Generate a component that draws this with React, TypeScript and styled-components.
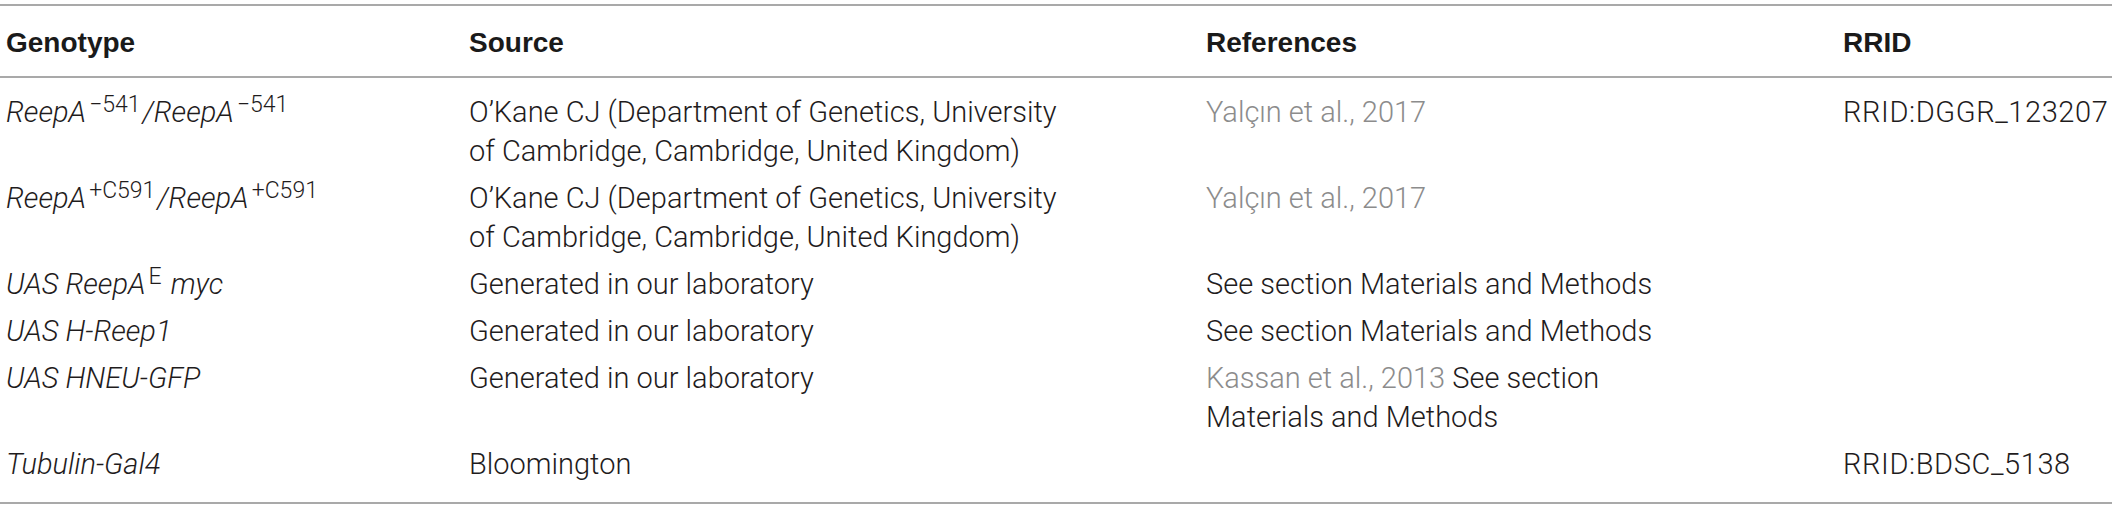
import React from "react";
import styled, { createGlobalStyle } from "styled-components";

const GlobalStyle = createGlobalStyle`
  html, body { margin: 0; padding: 0; background: #ffffff; }
  body { font-family: Roboto, "Liberation Sans", Arial, sans-serif; }
`;

const Page = styled.div`
  padding: 4px 0 0 0;
`;

const Table = styled.table`
  width: 2112px;
  border-collapse: collapse;
  table-layout: fixed;
  border-top: 2px solid #a9a9a9;
  border-bottom: 2px solid #a9a9a9;
  font-family: Roboto, "Liberation Sans", Arial, sans-serif;
  font-weight: 300;
  font-size: 29px;
  line-height: 39px;
  color: #1f1c1d;
`;

const HeadCell = styled.th`
  text-align: left;
  font-family: "Liberation Sans", Arial, sans-serif;
  font-weight: 700;
  font-size: 28px;
  padding: 17px 0 14px 6px;
  border-bottom: 2px solid #a9a9a9;
  color: #1a1a1a;
  white-space: nowrap;
`;

const Row = styled.tr`
  &:first-child td { padding-top: 15px; }
  &:last-child td { padding-bottom: 18px; }
`;

const Cell = styled.td<{ $italic?: boolean; $code?: boolean }>`
  vertical-align: top;
  padding: 4px 0 4px 6px;
  white-space: nowrap;
  font-style: ${(p) => (p.$italic ? "italic" : "normal")};
  letter-spacing: ${(p) => (p.$code ? "0.6px" : "normal")};
`;

const Sup = styled.sup`
  font-size: 23px;
  line-height: 0;
  vertical-align: 10px;
  font-style: normal;
  margin-left: 3px;
  margin-right: 2px;
`;

const Cite = styled.span`
  color: #8c8c8c;
`;

const widths = [463, 737, 637, 275];

export default function App() {
  return (
    <Page>
      <GlobalStyle />
      <Table>
        <colgroup>
          {widths.map((w, i) => (
            <col key={i} style={{ width: w }} />
          ))}
        </colgroup>
        <thead>
          <tr>
            <HeadCell>Genotype</HeadCell>
            <HeadCell>Source</HeadCell>
            <HeadCell>References</HeadCell>
            <HeadCell>RRID</HeadCell>
          </tr>
        </thead>
        <tbody>
          <Row>
            <Cell $italic>
              ReepA<Sup>−541</Sup>/ReepA<Sup>−541</Sup>
            </Cell>
            <Cell>
              O’Kane CJ (Department of Genetics, University
              <br />
              of Cambridge, Cambridge, United Kingdom)
            </Cell>
            <Cell>
              <Cite>Yalçın et al., 2017</Cite>
            </Cell>
            <Cell $code>RRID:DGGR_123207</Cell>
          </Row>
          <Row>
            <Cell $italic>
              ReepA<Sup>+C591</Sup>/ReepA<Sup>+C591</Sup>
            </Cell>
            <Cell>
              O’Kane CJ (Department of Genetics, University
              <br />
              of Cambridge, Cambridge, United Kingdom)
            </Cell>
            <Cell>
              <Cite>Yalçın et al., 2017</Cite>
            </Cell>
            <Cell />
          </Row>
          <Row>
            <Cell $italic>
              UAS ReepA<Sup>E</Sup> myc
            </Cell>
            <Cell>Generated in our laboratory</Cell>
            <Cell>See section Materials and Methods</Cell>
            <Cell />
          </Row>
          <Row>
            <Cell $italic>UAS H-Reep1</Cell>
            <Cell>Generated in our laboratory</Cell>
            <Cell>See section Materials and Methods</Cell>
            <Cell />
          </Row>
          <Row>
            <Cell $italic>UAS HNEU-GFP</Cell>
            <Cell>Generated in our laboratory</Cell>
            <Cell>
              <Cite>Kassan et al., 2013</Cite> See section
              <br />
              Materials and Methods
            </Cell>
            <Cell />
          </Row>
          <Row>
            <Cell $italic>Tubulin-Gal4</Cell>
            <Cell>Bloomington</Cell>
            <Cell />
            <Cell $code>RRID:BDSC_5138</Cell>
          </Row>
        </tbody>
      </Table>
    </Page>
  );
}
